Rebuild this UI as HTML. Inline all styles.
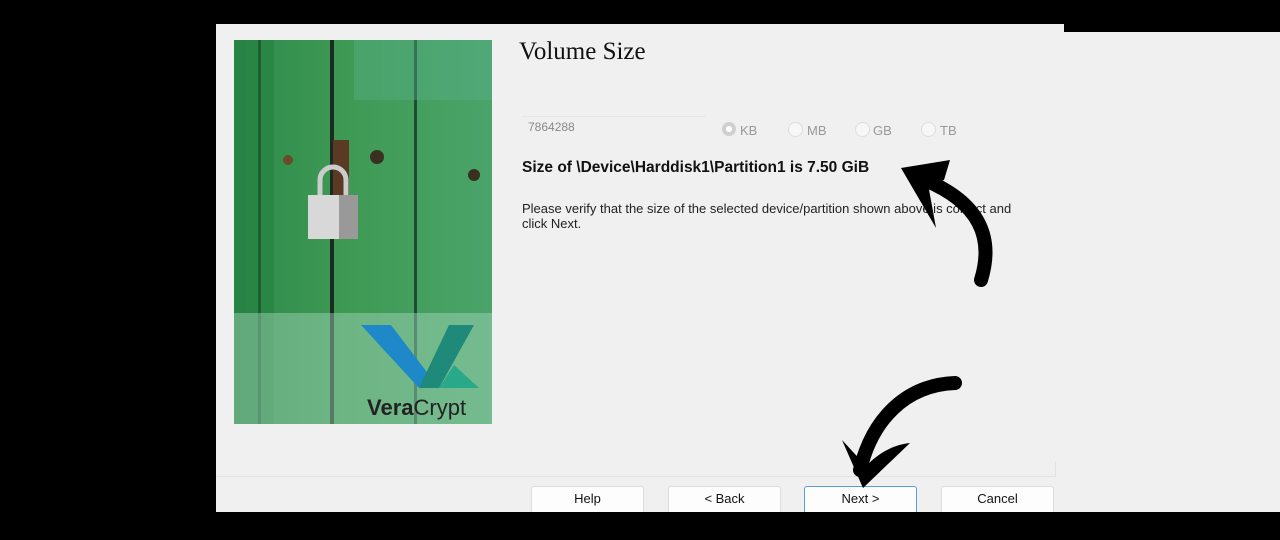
<!DOCTYPE html>
<html><head><style>
body{margin:0;width:1280px;height:540px;background:#000;position:relative;overflow:hidden;font-family:"Liberation Sans",sans-serif}
.a{position:absolute}
</style></head><body>
<div class="a" style="left:1064px;top:32px;width:216px;height:480px;background:#f0f0f0"></div>
<div class="a" style="left:216px;top:24px;width:848px;height:488px;background:#f0f0f0"></div>
<svg class="a" style="left:234px;top:40px" width="258" height="384" viewBox="0 0 258 384">
<defs><linearGradient id="g" x1="0" x2="1"><stop offset="0" stop-color="#2d8a4a"/><stop offset=".45" stop-color="#3f9a55"/><stop offset="1" stop-color="#4aa46a"/></linearGradient></defs>
<rect width="258" height="384" fill="url(#g)"/>
<rect x="0" y="0" width="40" height="384" fill="#24803f" opacity=".6"/>
<rect x="24" y="0" width="3" height="384" fill="#1f5e35"/>
<rect x="96" y="0" width="4" height="384" fill="#1b2b22"/>
<rect x="180" y="0" width="3" height="384" fill="#1d4d30"/>
<rect x="120" y="0" width="138" height="60" fill="#5bb089" opacity=".4"/>
<circle cx="54" cy="120" r="5" fill="#6b4a2a"/><circle cx="143" cy="117" r="7" fill="#3a3020"/><circle cx="240" cy="135" r="6" fill="#3a3020"/>
<rect x="99" y="100" width="16" height="70" fill="#5a3a22"/>
<path d="M86 160 v-20 a13 13 0 0 1 26 0 v20" fill="none" stroke="#ccc" stroke-width="5"/>
<rect x="74" y="155" width="50" height="44" fill="#d8d8d8"/><rect x="105" y="155" width="19" height="44" fill="#999"/>
<rect x="0" y="273" width="258" height="111" fill="#a8d8bf" opacity=".45"/>
<polygon points="127,285 157,285 205,348 185,348" fill="#1e88c8"/>
<polygon points="185,348 205,348 240,285 215,285" fill="#1f8a7a"/>
<polygon points="205,348 245,348 220,325" fill="#2aa98a"/>
<text x="133" y="375" font-size="22" font-family="Liberation Sans" fill="#222"><tspan font-weight="bold">Vera</tspan>Crypt</text>
</svg>
<div class="a" style="left:519px;top:38px;font-family:'Liberation Serif',serif;font-size:25px;color:#111">Volume Size</div>
<div class="a" style="left:522px;top:116px;width:184px;height:24px;background:#f0f0f0;border-top:1px solid #e6e6e6;font-size:12px;color:#888;padding-left:6px;line-height:20px;box-sizing:border-box">7864288</div>
<div class="a" style="left:722px;top:122px;width:14px;height:14px;border-radius:50%;background:#d0d0d0"><div style="margin:4px;width:6px;height:6px;border-radius:50%;background:#fff"></div></div>
<div class="a" style="left:740px;top:123px;font-size:13px;color:#999">KB</div>
<div class="a" style="left:788px;top:122px;width:13px;height:13px;border-radius:50%;border:1px solid #ddd;background:#f7f7f7"></div><div class="a" style="left:807px;top:123px;font-size:13px;color:#999">MB</div>
<div class="a" style="left:855px;top:122px;width:13px;height:13px;border-radius:50%;border:1px solid #ddd;background:#f7f7f7"></div><div class="a" style="left:873px;top:123px;font-size:13px;color:#999">GB</div>
<div class="a" style="left:921px;top:122px;width:13px;height:13px;border-radius:50%;border:1px solid #ddd;background:#f7f7f7"></div><div class="a" style="left:940px;top:123px;font-size:13px;color:#999">TB</div>
<div class="a" style="left:522px;top:159px;font-size:15.5px;font-weight:bold;color:#111;white-space:nowrap">Size of \Device\Harddisk1\Partition1 is 7.50 GiB</div>
<div class="a" style="left:522px;top:201px;font-size:13px;line-height:15px;color:#222;width:540px">Please verify that the size of the selected device/partition shown above is correct and<br>click Next.</div>
<div class="a" style="left:216px;top:476px;width:840px;height:1px;background:#e2e2e2"></div>
<div class="a" style="left:1055px;top:462px;width:1px;height:14px;background:#e2e2e2"></div>
<div class="a" style="left:531px;top:486px;width:111px;height:30px;background:#fdfdfd;border:1px solid #ddd;border-radius:3px;font-size:13px;text-align:center;line-height:24px;color:#111">Help</div>
<div class="a" style="left:668px;top:486px;width:111px;height:30px;background:#fdfdfd;border:1px solid #ddd;border-radius:3px;font-size:13px;text-align:center;line-height:24px;color:#111">&lt; Back</div>
<div class="a" style="left:804px;top:486px;width:111px;height:30px;background:#fdfdfd;border:1px solid #5a9fd8;border-radius:3px;font-size:13px;text-align:center;line-height:24px;color:#111">Next &gt;</div>
<div class="a" style="left:941px;top:486px;width:111px;height:30px;background:#fdfdfd;border:1px solid #ddd;border-radius:3px;font-size:13px;text-align:center;line-height:24px;color:#111">Cancel</div>
<div class="a" style="left:0;top:512px;width:1280px;height:28px;background:#000"></div>
<svg class="a" style="left:0;top:0" width="1280" height="540">
<path d="M981 280 C994 238 980 203 925 180" fill="none" stroke="#000" stroke-width="14" stroke-linecap="round"/>
<path d="M901 168 L950 160 L944 180 L928 184 L936 228 Z" fill="#000"/>
<path d="M955 383 C905 385 872 420 860 470" fill="none" stroke="#000" stroke-width="14" stroke-linecap="round"/>
<path d="M842 440 L863 488 L910 443 C890 445 876 456 866 466 Z" fill="#000"/>
</svg>
</body></html>
